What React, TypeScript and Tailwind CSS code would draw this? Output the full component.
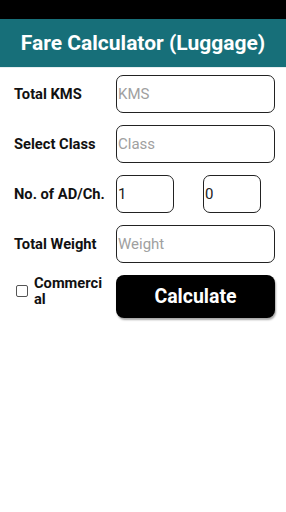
import { useState } from 'react';

export default function App() {
    const [kms, setKms] = useState('');
    const [cls, setCls] = useState('');
    const [adult, setAdult] = useState('1');
    const [child, setChild] = useState('0');
    const [weight, setWeight] = useState('');
    const [commercial, setCommercial] = useState(false);

    const inputCls =
        'flex-1 min-w-0 h-[38px] border-[1.5px] border-[#222] rounded-[7px] pl-[1px] pr-2 text-[15px] text-[#222] placeholder:text-[#a0a0a0] bg-white focus:outline-none';
    const smallCls =
        'w-[58px] h-[38px] border-[1.5px] border-[#222] rounded-[7px] pl-[1px] text-[15px] text-[#222] bg-white focus:outline-none';
    const labelCls = 'w-[102px] shrink-0 text-[14.7px] font-bold text-[#111]';

    return (
        <div className="w-[286px] min-h-[512px] bg-white font-['Roboto','Liberation_Sans',sans-serif]">
            <div className="h-[19px] bg-black" />
            <header className="h-[49px] bg-[#176f79] flex items-center justify-center border-b border-[#e6eef0]">
                <h1 className="text-white font-bold text-[21px] leading-none">Fare Calculator (Luggage)</h1>
            </header>

            <div className="pl-[14px] pr-[11px] pt-[7px] flex flex-col gap-[12px]">
                <div className="flex items-center">
                    <label className={labelCls}>Total KMS</label>
                    <input value={kms} onChange={(e) => setKms(e.target.value)} placeholder="KMS" className={inputCls} />
                </div>

                <div className="flex items-center">
                    <label className={labelCls}>Select Class</label>
                    <input value={cls} onChange={(e) => setCls(e.target.value)} placeholder="Class" className={inputCls} />
                </div>

                <div className="flex items-center">
                    <label className={labelCls}>No. of AD/Ch.</label>
                    <div className="flex gap-[29px]">
                        <input value={adult} onChange={(e) => setAdult(e.target.value)} className={smallCls} />
                        <input value={child} onChange={(e) => setChild(e.target.value)} className={smallCls} />
                    </div>
                </div>

                <div className="flex items-center">
                    <label className={labelCls}>Total Weight</label>
                    <input value={weight} onChange={(e) => setWeight(e.target.value)} placeholder="Weight" className={inputCls} />
                </div>

                <div className="flex items-start">
                    <div className="w-[102px] shrink-0 flex items-center gap-[6px] pl-[2px]">
                        <button
                            onClick={() => setCommercial(!commercial)}
                            className="w-[12px] h-[12px] shrink-0 border-[1.5px] border-[#555] rounded-[2px] flex items-center justify-center text-[9px] leading-none"
                        >
                            {commercial ? '✓' : ''}
                        </button>
                        <span className="w-[70px] break-all text-[14.7px] leading-[16px] font-bold text-[#111]">Commercial</span>
                    </div>
                    <button className="flex-1 h-[43px] bg-black text-white rounded-[8px] text-[19.5px] font-bold shadow-[1px_2px_2px_rgba(0,0,0,0.35)]">
                        Calculate
                    </button>
                </div>
            </div>
        </div>
    );
}
